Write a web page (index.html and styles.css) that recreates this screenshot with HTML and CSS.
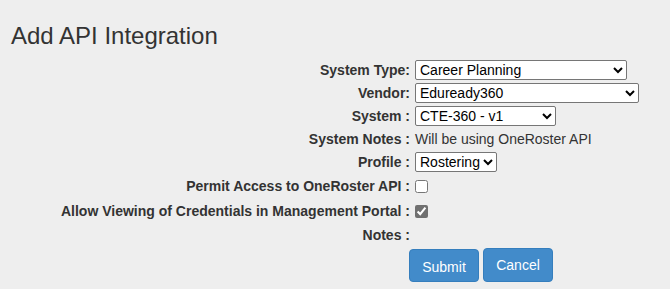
FILE: index.html
```html
<!DOCTYPE html>
<html>
<head>
    <title>Add API Integration</title>
    <link rel="stylesheet" href="styles.css">
</head>
<body>
    <h1 class="page-title">Add API Integration</h1>

    <form class="integration-form">
        <label class="field-label" for="systemType">System Type:</label>
        <div class="field">
            <select id="systemType" class="select-type">
                <option>Career Planning</option>
            </select>
        </div>

        <label class="field-label" for="vendor">Vendor:</label>
        <div class="field">
            <select id="vendor" class="select-vendor">
                <option>Eduready360</option>
            </select>
        </div>

        <label class="field-label" for="system">System :</label>
        <div class="field">
            <select id="system" class="select-system">
                <option>CTE-360 - v1</option>
            </select>
        </div>

        <div class="field-label">System Notes :</div>
        <div class="field field-text">Will be using OneRoster API</div>

        <label class="field-label" for="profile">Profile :</label>
        <div class="field">
            <select id="profile" class="select-profile">
                <option>Rostering</option>
            </select>
        </div>

        <label class="field-label" for="permitAccess">Permit Access to OneRoster API :</label>
        <div class="field">
            <input type="checkbox" id="permitAccess">
        </div>

        <label class="field-label" for="allowViewing">Allow Viewing of Credentials in Management Portal :</label>
        <div class="field">
            <input type="checkbox" id="allowViewing" class="locked-check" checked onclick="return false;">
        </div>

        <div class="field-label">Notes :</div>
        <div class="field"></div>

        <div></div>
        <div class="actions">
            <button type="submit" class="btn btn-submit">Submit</button>
            <button type="button" class="btn">Cancel</button>
        </div>
    </form>
</body>
</html>
```

FILE: styles.css
```css
* {
    margin: 0;
    padding: 0;
    box-sizing: border-box;
}

body {
    background-color: #eeeeee;
    font-family: "Liberation Sans", Arial, sans-serif;
    color: #333333;
    width: 670px;
    height: 289px;
    overflow: hidden;
}

.page-title {
    font-size: 24px;
    font-weight: normal;
    line-height: 26px;
    padding: 23px 0 0 11px;
    height: 60px;
}

.integration-form {
    display: grid;
    grid-template-columns: 410px auto;
    grid-template-rows: 20px 20px 20px 20px 20px 22px 22px 20px auto;
    row-gap: 3px;
    column-gap: 5px;
}

.field-label {
    font-size: 14px;
    font-weight: bold;
    text-align: right;
    display: flex;
    align-items: center;
    justify-content: flex-end;
}

.field {
    display: flex;
    align-items: center;
}

.field-text {
    font-size: 14px;
}

select {
    height: 20px;
    font-family: "Liberation Sans", Arial, sans-serif;
    font-size: 14px;
    color: #000000;
    background-color: #ffffff;
    border: 1px solid #767676;
    border-radius: 2px;
}

.select-type { width: 212px; }
.select-vendor { width: 224px; }
.select-system { width: 141px; }
.select-profile { width: 82px; }

input[type="checkbox"] {
    width: 13px;
    height: 13px;
    margin: 0;
}

.locked-check {
    accent-color: #707070;
    cursor: default;
}

.actions {
    display: flex;
    gap: 4px;
    margin-left: -6px;
}

.btn {
    width: 70px;
    height: 34px;
    background-color: #428bca;
    border: 1px solid #357ebd;
    border-radius: 4px;
    color: #ffffff;
    font-family: "Liberation Sans", Arial, sans-serif;
    font-size: 14px;
    cursor: pointer;
}

.btn-submit {
    height: 33px;
    margin-top: 1px;
    padding-top: 3px;
}
```
